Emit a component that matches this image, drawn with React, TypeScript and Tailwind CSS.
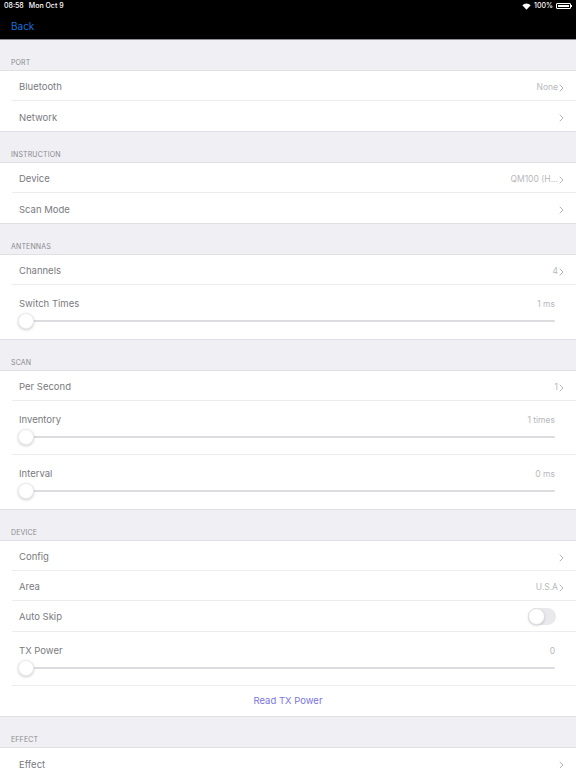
import React from 'react';

const font = { fontFamily: 'Inter, "Liberation Sans", sans-serif' };

const Chevron: React.FC = () => (
    <svg width="5" height="8" viewBox="0 0 5 8" className="ml-[1px]">
        <path d="M1 1l3 3-3 3" fill="none" stroke="#b4b4b8" strokeWidth="1" strokeLinecap="round" strokeLinejoin="round" />
    </svg>
);

const SectionHeader: React.FC<{ title: string }> = ({ title }) => (
    <div className="h-[30px] flex items-end px-[11px] pb-[2px] text-[7px] tracking-[0.02em] text-[#8a8a8e] uppercase">
        {title}
    </div>
);

const Row: React.FC<{ label: string; value?: string; last?: boolean; chevron?: boolean }> = ({ label, value, last, chevron = true }) => (
    <div className="pl-[12px]">
        <div className={`h-[30px] flex items-center pt-[4px] pl-[7px] pr-[12px] ${last ? '' : 'border-b border-[#ececf0]'}`}>
            <span className="text-[9.5px] text-[#7a7a7e]">{label}</span>
            <div className="ml-auto flex items-center text-[8.5px] text-[#b8b8bc]">
                {value && <span>{value}</span>}
                {chevron && <Chevron />}
            </div>
        </div>
    </div>
);

const SliderRow: React.FC<{ label: string; value: string; last?: boolean }> = ({ label, value, last }) => (
    <div className="pl-[12px]">
        <div className={`h-[54px] flex flex-col pl-[7px] pr-[21px] ${last ? '' : 'border-b border-[#ececf0]'}`}>
            <div className="h-[36px] flex items-center pt-[3px]">
                <span className="text-[9.5px] text-[#7a7a7e]">{label}</span>
                <span className="ml-auto text-[8.5px] text-[#b8b8bc]">{value}</span>
            </div>
            <div className="relative h-[2px] -mt-[1px] bg-[#dcdce0] rounded-full">
                <div className="absolute -left-[1px] -top-[7px] w-[16px] h-[16px] rounded-full bg-white shadow-[0_1px_3px_rgba(0,0,0,0.2)] border border-[#ececec]" />
            </div>
        </div>
    </div>
);

const ToggleRow: React.FC<{ label: string }> = ({ label }) => (
    <div className="pl-[12px]">
        <div className="h-[31px] flex items-center pl-[7px] pr-[20px] border-b border-[#ececf0]">
            <span className="text-[9.5px] text-[#7a7a7e] pt-[3px]">{label}</span>
            <div className="ml-auto w-[28px] h-[17px] rounded-full bg-[#e9e9eb] relative">
                <div className="absolute left-0 top-0 w-[17px] h-[17px] rounded-full bg-white border border-[#dedee2] shadow-[0_1px_2px_rgba(0,0,0,0.15)]" />
            </div>
        </div>
    </div>
);

const Group: React.FC<{ children: React.ReactNode }> = ({ children }) => (
    <div className="bg-white border-t border-b border-[#e0e0e4]">{children}</div>
);

const App: React.FC = () => {
    return (
        <div className="w-[576px] h-[768px] overflow-hidden bg-[#efeff4]" style={font}>
            {/* Nav bar */}
            <div className="bg-black h-[40px] border-b border-[#8e8e93] flex flex-col">
                <div className="h-[12px] flex items-center px-[4px] text-[7px] text-white font-medium">
                    <span>08:58</span>
                    <span className="ml-[5px]">Mon Oct 9</span>
                    <div className="ml-auto flex items-center gap-[3px]">
                        <svg width="9" height="7" viewBox="0 0 9 7">
                            <path d="M4.5 6.8L0.3 2.3a6 6 0 0 1 8.4 0z" fill="white" />
                        </svg>
                        <span>100%</span>
                        <div className="flex items-center">
                            <div className="w-[15px] h-[6px] border border-white rounded-[1px] p-[1px]">
                                <div className="w-full h-full bg-white" />
                            </div>
                            <div className="w-[1px] h-[2px] bg-white" />
                        </div>
                    </div>
                </div>
                <div className="flex-1 flex items-center px-[11px] pt-[1px]">
                    <span className="text-[10px] text-[#1a6fd6]">Back</span>
                </div>
            </div>

            <SectionHeader title="Port" />
            <Group>
                <Row label="Bluetooth" value="None" />
                <Row label="Network" last />
            </Group>

            <SectionHeader title="Instruction" />
            <Group>
                <Row label="Device" value="QM100   (H..." />
                <Row label="Scan Mode" last />
            </Group>

            <SectionHeader title="Antennas" />
            <Group>
                <Row label="Channels" value="4" />
                <SliderRow label="Switch Times" value="1 ms" last />
            </Group>

            <SectionHeader title="Scan" />
            <Group>
                <Row label="Per Second" value="1" />
                <SliderRow label="Inventory" value="1 times" />
                <SliderRow label="Interval" value="0 ms" last />
            </Group>

            <SectionHeader title="Device" />
            <Group>
                <Row label="Config" />
                <Row label="Area" value="U.S.A" />
                <ToggleRow label="Auto Skip" />
                <SliderRow label="TX Power" value="0" />
                <div className="h-[30px] flex items-center justify-center text-[9.5px] text-[#7a74e0]">
                    Read TX Power
                </div>
            </Group>

            <SectionHeader title="Effect" />
            <Group>
                <Row label="Effect" last />
            </Group>
        </div>
    );
};

export default App;
